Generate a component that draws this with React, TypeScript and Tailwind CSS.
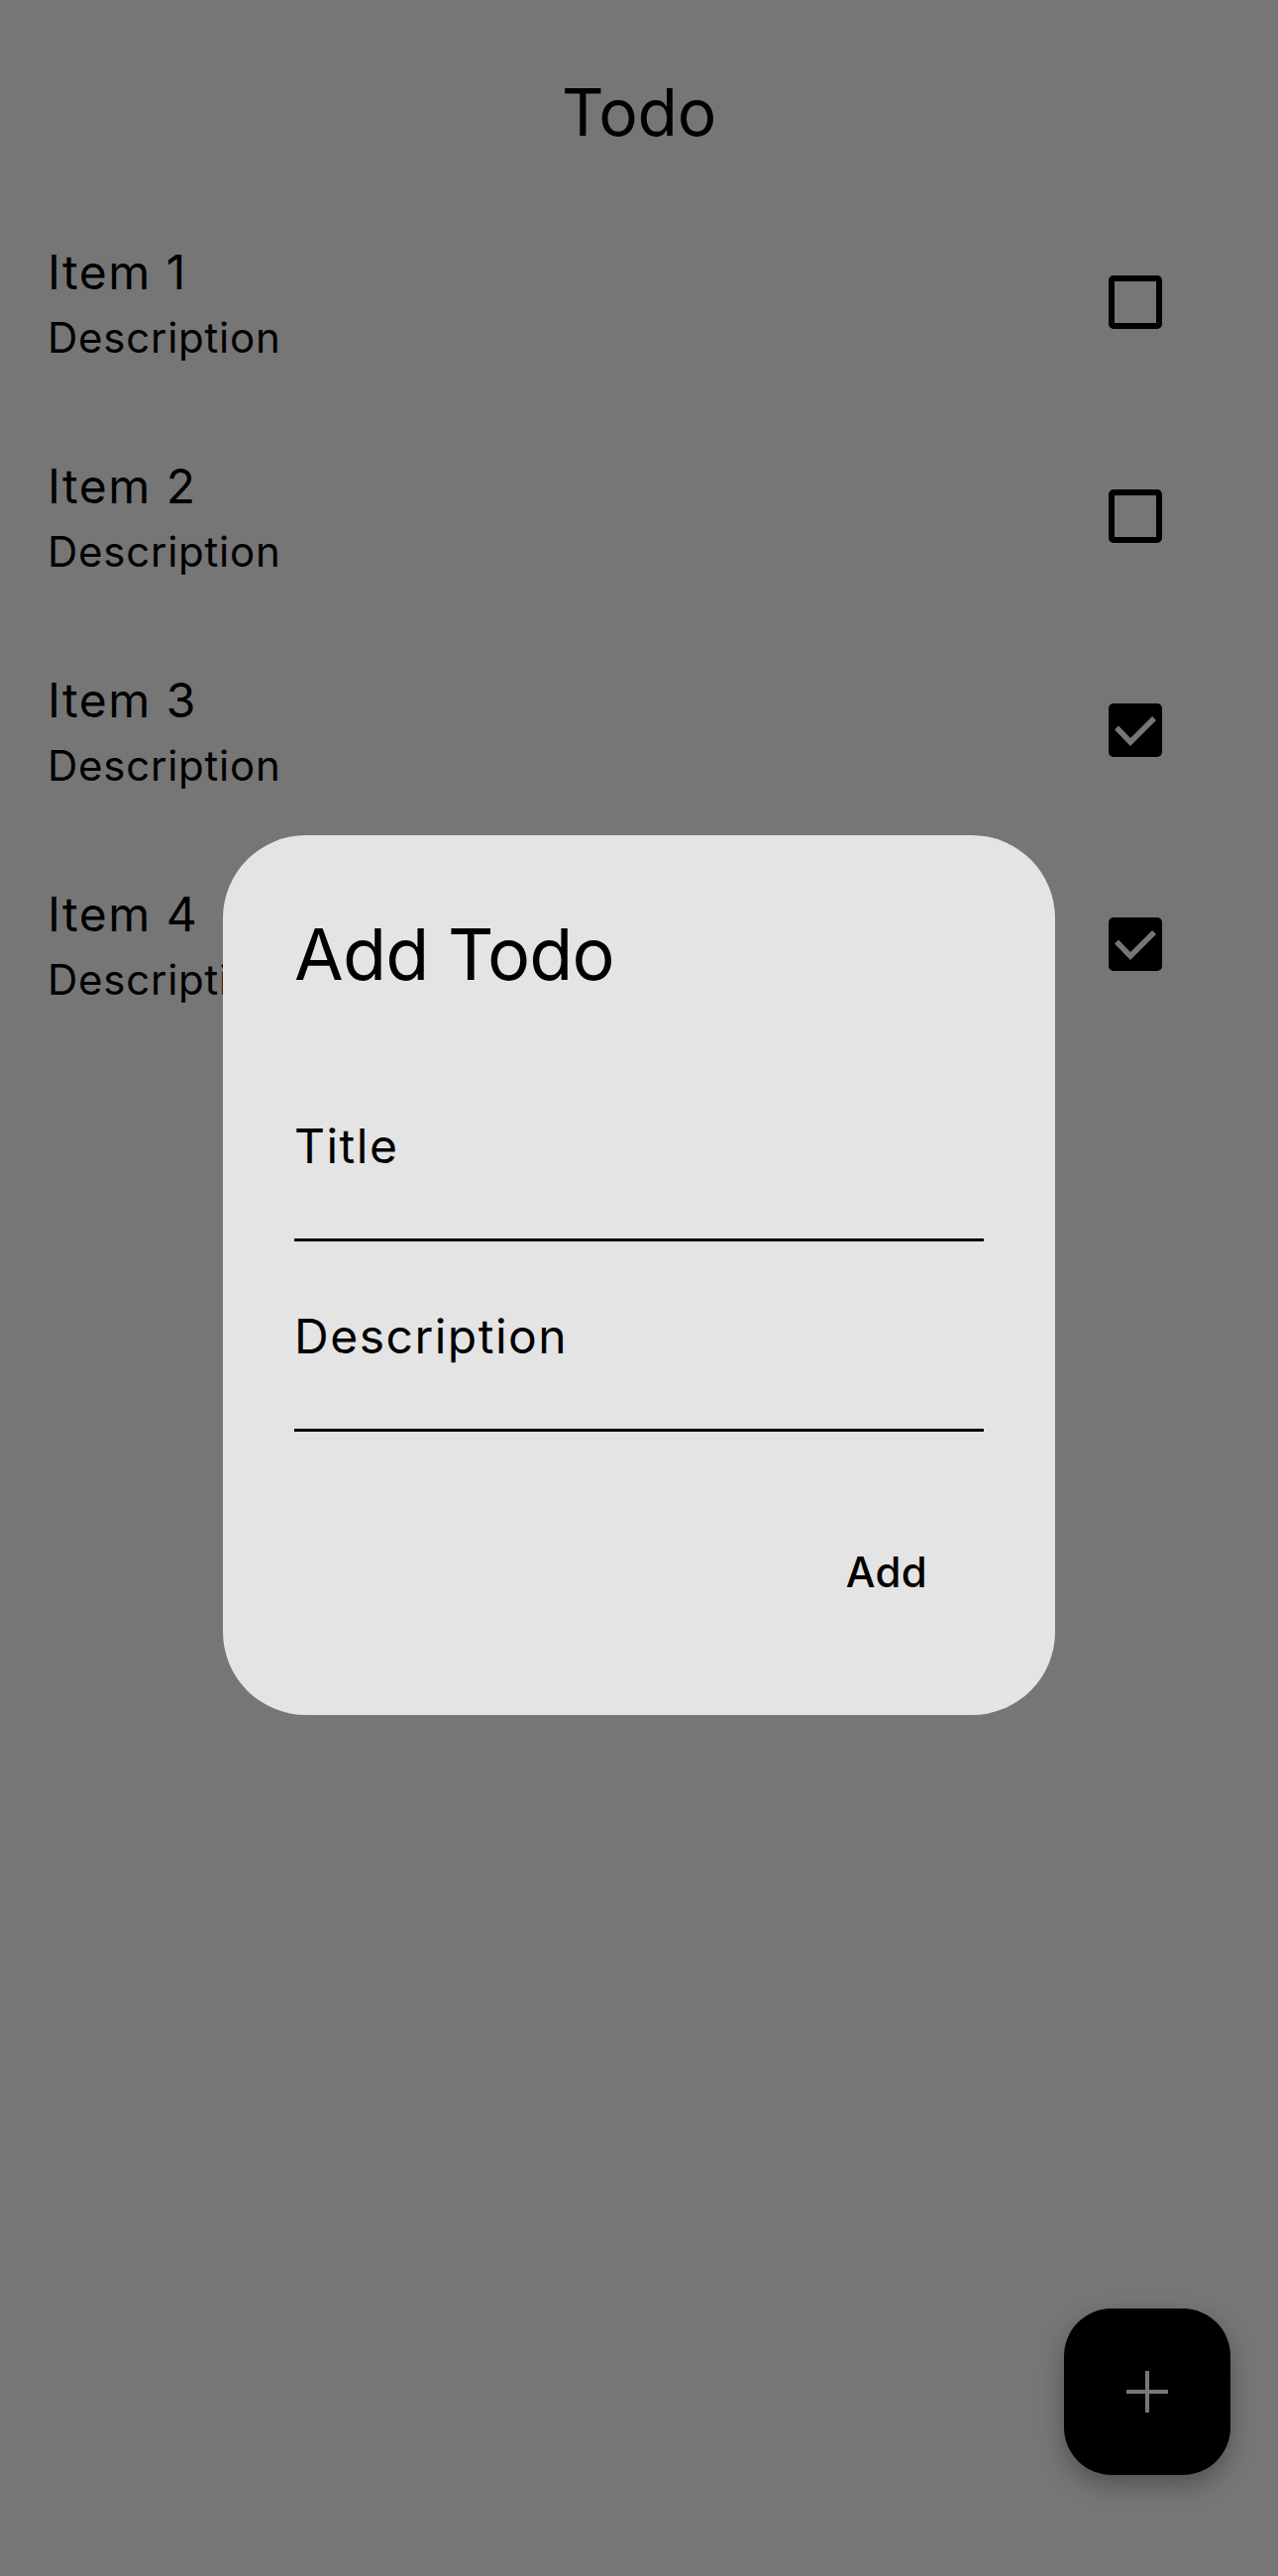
const todos = [
  { title: 'Item 1', description: 'Description', done: false },
  { title: 'Item 2', description: 'Description', done: false },
  { title: 'Item 3', description: 'Description', done: true },
  { title: 'Item 4', description: 'Description', done: true },
]

function Checkbox({ checked }: { checked: boolean }) {
  if (checked) {
    return (
      <div className="w-[54px] h-[54px] rounded-[5px] bg-black flex items-center justify-center">
        <svg width="54" height="54" viewBox="0 0 54 54" fill="none">
          <path d="M8 24.5L22 39L46 15" stroke="#767676" strokeWidth="5.5" />
        </svg>
      </div>
    )
  }
  return <div className="w-[54px] h-[54px] rounded-[5px] border-[6px] border-black" />
}

function TodoRow({ title, description, done }: { title: string; description: string; done: boolean }) {
  return (
    <li className="h-[216px] pl-[48px] pr-[72px] flex items-center justify-between">
      <div>
        <p className="text-[48px] leading-[72px] tracking-[1.5px]">{title}</p>
        <p className="text-[42px] leading-[60px] tracking-[0.75px]">{description}</p>
      </div>
      <div className="w-[144px] h-[144px] flex items-center justify-center">
        <Checkbox checked={done} />
      </div>
    </li>
  )
}

function Field({ label, className }: { label: string; className?: string }) {
  return (
    <div className={`h-[168px] border-b-[3px] border-black pt-[36px] ${className ?? ''}`}>
      <span className="block text-[48px] leading-[72px] tracking-[1.5px]">{label}</span>
    </div>
  )
}

export default function App() {
  return (
    <div className="relative w-[1290px] min-h-[2600px] bg-[#767676] text-black font-['Inter',sans-serif]">
      <header className="h-[197px] pt-[71px]">
        <h1 className="text-center text-[66px] leading-[84px] tracking-[-0.3px]">Todo</h1>
      </header>

      <ul>
        {todos.map((t) => (
          <TodoRow key={t.title} {...t} />
        ))}
      </ul>

      {/* Add dialog */}
      <div className="absolute left-[225px] top-[843px] w-[840px] h-[888px] rounded-[84px] bg-[#e4e4e4] p-[72px]">
        <h2 className="text-[72px] leading-[96px] tracking-[-0.8px]">Add Todo</h2>
        <Field label="Title" className="mt-[74px]" />
        <Field label="Description" className="mt-[24px]" />
        <div className="mt-[82px] flex justify-end pr-[21px]">
          <button className="h-[120px] px-[36px] text-[42px] leading-[60px] font-medium tracking-[0.3px]">Add</button>
        </div>
      </div>

      {/* FAB */}
      <button className="absolute left-[1074px] top-[2330px] w-[168px] h-[168px] rounded-[48px] bg-black flex items-center justify-center shadow-[0_10px_24px_rgba(0,0,0,0.3)]">
        <svg width="42" height="42" viewBox="0 0 42 42">
          <rect x="19" y="0" width="4" height="42" fill="#777777" />
          <rect x="0" y="19" width="42" height="4" fill="#777777" />
        </svg>
      </button>
    </div>
  )
}
